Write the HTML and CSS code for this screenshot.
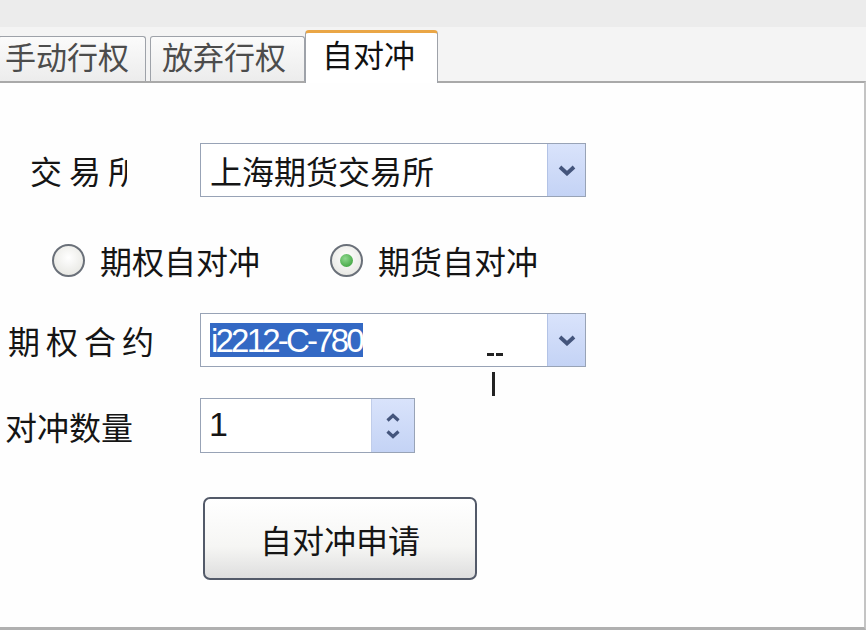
FILE: index.html
```html
<!DOCTYPE html>
<html lang="zh-CN">
<head>
    <meta charset="UTF-8">
    <title>自对冲</title>
    <link rel="stylesheet" href="styles.css">
</head>
<body>
    <div class="window">
        <div class="tabs">
            <div class="tab tab-first">手动行权</div>
            <div class="tab tab-second">放弃行权</div>
            <div class="tab active">自对冲</div>
        </div>

        <div class="panel">
            <div class="row row-exchange">
                <span class="label label-exchange">交易所</span>
                <div class="combo">
                    <span class="combo-text">上海期货交易所</span>
                    <span class="combo-btn">
                        <svg width="18" height="11" viewBox="0 0 18 11"><path d="M2 2 L9 8.5 L16 2" fill="none" stroke="#44557c" stroke-width="3.8"/></svg>
                    </span>
                </div>
            </div>

            <div class="radios">
                <label class="radio"><span class="dot"></span>期权自对冲</label>
                <label class="radio checked"><span class="dot"></span>期货自对冲</label>
            </div>

            <div class="row row-contract">
                <span class="label label-contract">期权合约</span>
                <div class="combo">
                    <span class="combo-text"><span class="selected">i2212-C-780</span></span>
                    <span class="combo-btn">
                        <svg width="18" height="11" viewBox="0 0 18 11"><path d="M2 2 L9 8.5 L16 2" fill="none" stroke="#44557c" stroke-width="3.8"/></svg>
                    </span>
                </div>
            </div>

            <div class="row row-qty">
                <span class="label label-qty">对冲数量</span>
                <div class="spin">
                    <span class="spin-text">1</span>
                    <span class="spin-btn">
                        <svg width="14" height="9" viewBox="0 0 14 9"><path d="M1.5 7.5 L7 2.5 L12.5 7.5" fill="none" stroke="#44557c" stroke-width="3.2"/></svg>
                        <svg width="14" height="9" viewBox="0 0 14 9"><path d="M1.5 1.5 L7 6.5 L12.5 1.5" fill="none" stroke="#44557c" stroke-width="3.2"/></svg>
                    </span>
                </div>
            </div>

            <div class="row row-submit">
                <button class="submit">自对冲申请</button>
            </div>
        </div>

        <!-- mouse I-beam left in the capture -->
        <svg class="cursor" width="18" height="44" viewBox="0 0 18 44">
            <rect x="0" y="0" width="7" height="3" fill="#222"/>
            <rect x="9" y="0" width="7" height="3" fill="#222"/>
            <rect x="5" y="19" width="3" height="24" fill="#222"/>
        </svg>
    </div>
</body>
</html>
```

FILE: styles.css
```css
/* Base */
body {
    margin: 0;
    font-family: "Noto Sans CJK SC", sans-serif;
    color: #151515;
    overflow: hidden;
}

.window {
    position: relative;
    width: 866px;
    height: 630px;
    display: flex;
    flex-direction: column;
    background: linear-gradient(#ececec 0, #ececec 27px, #f4f4f4 27px);
}

/* Tab strip */
.tabs {
    display: flex;
    align-items: flex-end;
    height: 81px;
    flex-shrink: 0;
}

.tab {
    box-sizing: border-box;
    height: 45px;
    border: 1px solid #9ea2a9;
    border-bottom: none;
    border-radius: 3px 3px 0 0;
    background: linear-gradient(#fbfbfb, #ececec);
    color: #4c4c4c;
    font-size: 31px;
    line-height: 38px;
    white-space: nowrap;
}

.tab-first {
    width: 148px;
    margin-left: -2px;
    padding-left: 6px;
}

.tab-second {
    width: 155px;
    margin-left: 4px;
    padding-left: 11px;
}

.tab.active {
    position: relative;
    z-index: 1;
    width: 133px;
    height: 53px;
    margin-bottom: -2px;
    padding-left: 16px;
    border-top: 3px solid #eaa646;
    border-radius: 4px 4px 0 0;
    background: #fff;
    color: #111;
    line-height: 42px;
}

/* Panel */
.panel {
    flex: 1;
    background: #fefefe;
    border-top: 2px solid #a9a9a9;
    border-right: 2px solid #c4c4c4;
    border-bottom: 3px solid #b0b0b0;
    font-size: 32px;
}

.row {
    display: flex;
    align-items: center;
}

.label {
    box-sizing: border-box;
    width: 200px;
    white-space: nowrap;
}

/* last glyph is cut off by the narrow label control */
.label-exchange {
    width: 127px;
    margin-right: 73px;
    padding-left: 30px;
    letter-spacing: 7px;
    overflow: hidden;
}

.label-contract {
    padding-left: 8px;
    letter-spacing: 6px;
}

.label-qty {
    padding-left: 5px;
}

.row-exchange {
    margin-top: 60px;
}

.combo {
    box-sizing: border-box;
    width: 386px;
    height: 54px;
    display: flex;
    border: 1px solid #98a3b6;
    background: #fff;
}

.combo-text {
    flex: 1;
    display: flex;
    align-items: center;
    padding-left: 9px;
    white-space: nowrap;
}

.combo-btn {
    width: 37px;
    display: flex;
    align-items: center;
    justify-content: center;
    border-left: 1px solid #b3c3e6;
    background: linear-gradient(#d9e3fb, #c4d3f5);
}

.selected {
    display: inline-block;
    height: 34px;
    padding: 0 1px;
    background: #3469c4;
    color: #fff;
    font-family: "Liberation Sans", sans-serif;
    font-size: 33px;
    letter-spacing: -2.8px;
    line-height: 35px;
}

/* Radios */
.radios {
    display: flex;
    align-items: center;
    height: 34px;
    margin: 46px 0 36px;
    padding-left: 52px;
}

.radio {
    display: flex;
    align-items: center;
    gap: 15px;
    white-space: nowrap;
}

.radio + .radio {
    margin-left: 70px;
}

.dot {
    box-sizing: border-box;
    width: 33px;
    height: 33px;
    border-radius: 50%;
    border: 2px solid #6a7079;
    background: radial-gradient(circle at 50% 40%, #ffffff, #e2e2dc);
    display: flex;
    align-items: center;
    justify-content: center;
}

.radio.checked .dot::after {
    content: "";
    width: 13px;
    height: 13px;
    border-radius: 50%;
    background: radial-gradient(circle at 40% 35%, #8fd88f, #2f9a2f);
}

/* Spin box */
.row-qty {
    margin-top: 31px;
}

.spin {
    box-sizing: border-box;
    width: 215px;
    height: 55px;
    display: flex;
    border: 1px solid #98a3b6;
    background: #fff;
}

.spin-text {
    flex: 1;
    padding-left: 8px;
    font-family: "Liberation Sans", sans-serif;
    font-size: 34px;
    line-height: 50px;
}

.spin-btn {
    width: 42px;
    display: flex;
    flex-direction: column;
    align-items: center;
    justify-content: center;
    gap: 8px;
    border-left: 1px solid #c0cdea;
    background: linear-gradient(#d9e3fb, #c4d3f5);
}

/* Button */
.row-submit {
    margin-top: 44px;
}

.submit {
    width: 274px;
    height: 83px;
    margin-left: 203px;
    border: 2px solid #535a69;
    border-radius: 7px;
    background: linear-gradient(#ffffff, #f6f6f4 60%, #dedede);
    font-family: "Noto Sans CJK SC", sans-serif;
    font-size: 32px;
    color: #151515;
    padding: 0;
    cursor: pointer;
}

.cursor {
    position: absolute;
    left: 487px;
    top: 353px;
}
```
